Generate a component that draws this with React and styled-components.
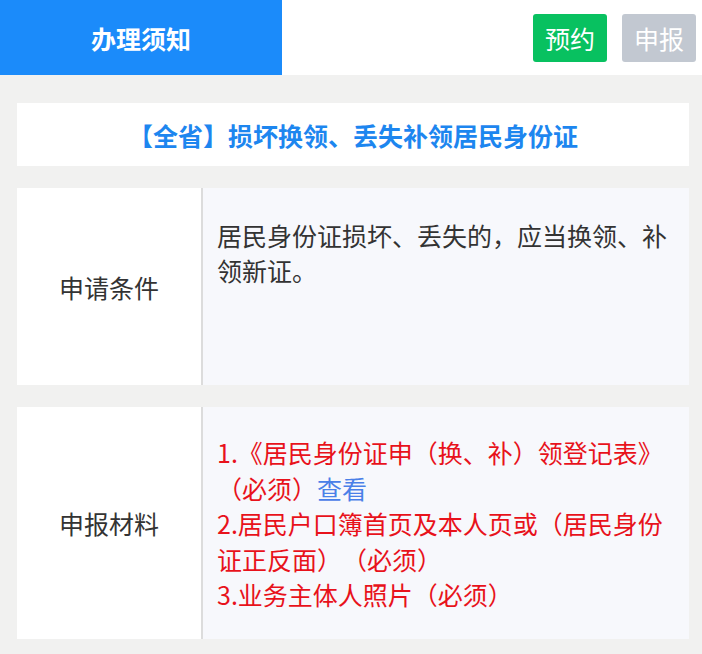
import React from "react"
import styled, { createGlobalStyle } from "styled-components"

const GlobalStyle = createGlobalStyle`
  html, body {
    margin: 0;
    padding: 0;
    background: #f1f1f0;
    font-family: "Noto Sans CJK SC", "Noto Sans", sans-serif;
    text-spacing-trim: space-all;
  }
`

const Page = styled.div`
  width: 702px;
  min-height: 654px;
  background: #f1f1f0;
`

const Header = styled.header`
  display: flex;
  align-items: center;
  height: 75px;
  background: #fff;
`

const Tab = styled.div`
  width: 282px;
  height: 100%;
  display: flex;
  align-items: center;
  justify-content: center;
  background: #1b8bfa;
  color: #fff;
  font-size: 25px;
  font-weight: 700;
`

const Actions = styled.div`
  margin-left: auto;
  display: flex;
  gap: 15px;
  padding-right: 6px;
`

const ActionButton = styled.button`
  width: 74px;
  height: 48px;
  border: none;
  border-radius: 3px;
  padding: 0;
  font-family: inherit;
  font-size: 25px;
  color: #fff;
  background: ${(p) => (p.$disabled ? "#c2c8d1" : "#08c160")};
`

const Body = styled.main`
  display: flex;
  flex-direction: column;
  gap: 22px;
  padding: 28px 13px 15px 17px;
`

const TitleCard = styled.div`
  height: 63px;
  display: flex;
  align-items: center;
  justify-content: center;
  background: #fff;
  color: #1d86ef;
  font-size: 25px;
  font-weight: 700;
`

const InfoCard = styled.section`
  display: flex;
  background: #fff;
  min-height: ${(p) => p.$minHeight || 0}px;
`

const Label = styled.div`
  width: 184px;
  flex-shrink: 0;
  display: flex;
  align-items: center;
  justify-content: center;
  border-right: 2px solid #dcdcdc;
  color: #333;
  font-size: 25px;
`

const Content = styled.div`
  flex: 1;
  background: #f7f8fc;
  padding: ${(p) => p.$pad || "30px 15px 30px 14px"};
  font-size: 25px;
  line-height: 35px;
  color: #333;
`

const Item = styled.div`
  color: #e8121b;
  line-height: 35.5px;
`

const Link = styled.span`
  color: #4a80e8;
`

export default function App() {
  return (
    <>
      <GlobalStyle />
      <Page>
        <Header>
          <Tab>办理须知</Tab>
          <Actions>
            <ActionButton>预约</ActionButton>
            <ActionButton $disabled>申报</ActionButton>
          </Actions>
        </Header>
        <Body>
          <TitleCard>【全省】损坏换领、丢失补领居民身份证</TitleCard>
          <InfoCard $minHeight={197}>
            <Label>申请条件</Label>
            <Content>居民身份证损坏、丢失的，应当换领、补领新证。</Content>
          </InfoCard>
          <InfoCard $minHeight={232}>
            <Label>申报材料</Label>
            <Content $pad="28px 15px 26px 14px">
              <Item>
                1.《居民身份证申（换、补）领登记表》（必须）<Link>查看</Link>
              </Item>
              <Item>2.居民户口簿首页及本人页或（居民身份证正反面）（必须）</Item>
              <Item>3.业务主体人照片（必须）</Item>
            </Content>
          </InfoCard>
        </Body>
      </Page>
    </>
  )
}
